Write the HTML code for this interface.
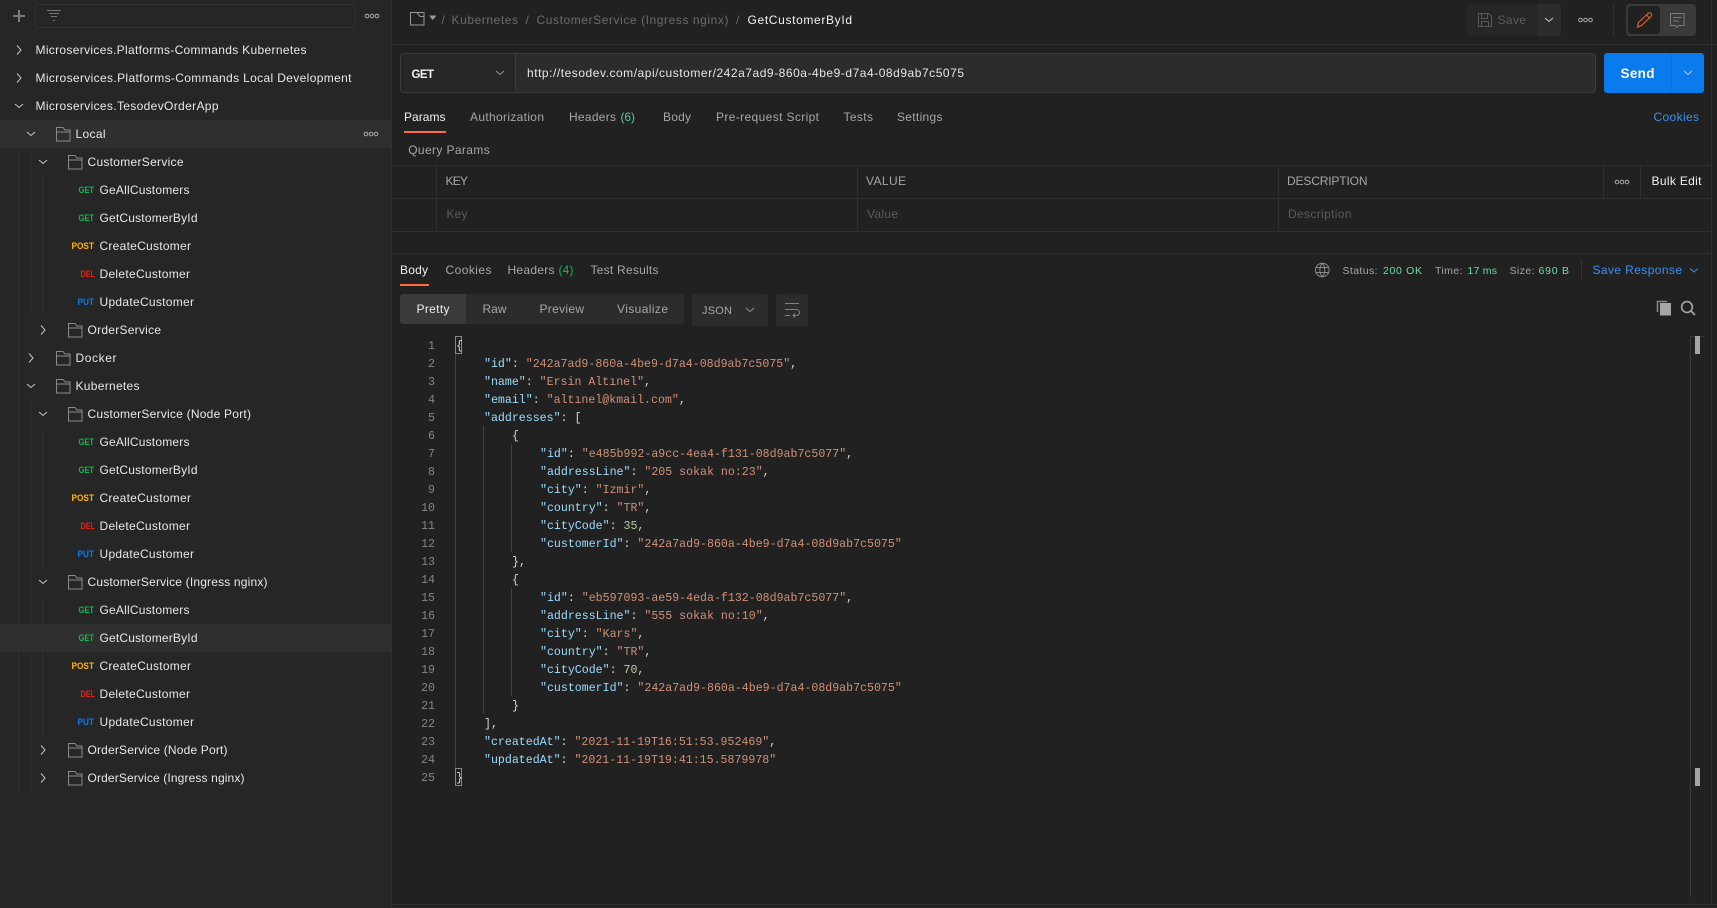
<!DOCTYPE html>
<html lang="en"><head><meta charset="utf-8"><title>GetCustomerById</title>
<style>
html,body{margin:0;padding:0;background:#212121;width:1717px;height:908px;overflow:hidden}
svg{display:block}
text{font-family:"Liberation Sans",sans-serif;font-size:12px;fill:#a6a6a6}
.s text,text.s{fill:#e8e8e8}
.m text{font-size:9.5px;font-weight:700}
.g{fill:#0cbb52}.p{fill:#ffb400}.d{fill:#eb2013}.u{fill:#097bed}
.c text{font-family:"Liberation Mono",monospace;font-size:11.6px;fill:#d4d4d4;white-space:pre}
.n text{font-family:"Liberation Mono",monospace;font-size:11.6px;fill:#858585;text-anchor:end}
.k{fill:#9cdcfe}.v{fill:#ce9178}.b{fill:#b5cea8}
.ln{stroke:#303030;stroke-width:1;fill:none}
.ig{stroke:#404040;stroke-width:1;fill:none}
</style></head><body>
<svg width="1717" height="908" viewBox="0 0 1717 908" xmlns="http://www.w3.org/2000/svg">
<defs>
<symbol id="fo" width="15" height="15" viewBox="0 0 15 15"><path d="M.5 14V.5H7L9 3H14V14ZM.5 5H14" fill="none" stroke="#8a8a8a"/></symbol>
<symbol id="cr" width="6" height="10" viewBox="0 0 6 10"><path d="M1 .5L5 5 1 9.5" fill="none" stroke="#c4c4c4"/></symbol>
<symbol id="cd" width="10" height="6" viewBox="0 0 10 6"><path d="M1 1L5 4.5 9 1" fill="none" stroke="#c4c4c4"/></symbol>
<symbol id="dt" width="15" height="5" viewBox="0 0 15 5"><g fill="none" stroke="#aaa"><circle cx="2.5" cy="2.5" r="1.8"/><circle cx="7.5" cy="2.5" r="1.8"/><circle cx="12.5" cy="2.5" r="1.8"/></g></symbol>
</defs>

<!-- main bg -->
<rect width="1717" height="908" fill="#212121"/>
<!-- sidebar -->
<rect width="391" height="908" fill="#262626"/>
<rect x="391" width="1" height="908" fill="#2e2e2e"/>
<rect y="120" width="391" height="28" fill="#2f2f2f"/>
<rect y="624" width="391" height="28" fill="#2f2f2f"/>
<path d="M18.5 148V792M30.5 148V316M30.5 400V792M42.5 176V316M42.5 428V568M42.5 596V736" class="ln"/>

<!-- sidebar top -->
<path d="M13 16H25M19 10V22" stroke="#7a7a7a" stroke-width="2" fill="none"/>
<rect x="35.5" y="4.5" width="320" height="23" rx="2" fill="none" stroke="#303030"/>
<path d="M47 10.500H61M49 13.500H59M51 16.500H57M53 20.500H55" stroke="#777" fill="none"/>
<use href="#dt" x="364.500" y="13.500"/>
<use href="#dt" x="363.500" y="131.500"/>

<!-- chevrons -->
<use href="#cr" x="16" y="45"/><use href="#cr" x="16" y="73"/><use href="#cd" x="14" y="103"/>
<use href="#cd" x="26" y="131"/><use href="#cd" x="38" y="159"/>
<use href="#cr" x="40" y="325"/><use href="#cr" x="28" y="353"/><use href="#cd" x="26" y="383"/>
<use href="#cd" x="38" y="411"/><use href="#cd" x="38" y="579"/>
<use href="#cr" x="40" y="745"/><use href="#cr" x="40" y="773"/>
<!-- folders -->
<use href="#fo" x="56" y="127"/><use href="#fo" x="68" y="155"/><use href="#fo" x="68" y="323"/><use href="#fo" x="56" y="351"/><use href="#fo" x="56" y="379"/><use href="#fo" x="68" y="407"/><use href="#fo" x="68" y="575"/><use href="#fo" x="68" y="743"/><use href="#fo" x="68" y="771"/>

<g class="s">
<text x="35.500" y="54" textLength="271">Microservices.Platforms-Commands Kubernetes</text>
<text x="35.500" y="82" textLength="316">Microservices.Platforms-Commands Local Development</text>
<text x="35.500" y="110" textLength="183">Microservices.TesodevOrderApp</text>
<text x="75.500" y="138" textLength="30">Local</text>
<text x="87.500" y="166" textLength="96">CustomerService</text>
<text x="99.500" y="194" textLength="90">GeAllCustomers</text>
<text x="99.500" y="222" textLength="98">GetCustomerById</text>
<text x="99.500" y="250" textLength="91.500">CreateCustomer</text>
<text x="99.500" y="278" textLength="90.500">DeleteCustomer</text>
<text x="99.500" y="306" textLength="94.500">UpdateCustomer</text>
<text x="87.500" y="334" textLength="73.500">OrderService</text>
<text x="75.500" y="362" textLength="41">Docker</text>
<text x="75.500" y="390" textLength="64">Kubernetes</text>
<text x="87.500" y="418" textLength="163.500">CustomerService (Node Port)</text>
<text x="99.500" y="446" textLength="90">GeAllCustomers</text>
<text x="99.500" y="474" textLength="98">GetCustomerById</text>
<text x="99.500" y="502" textLength="91.500">CreateCustomer</text>
<text x="99.500" y="530" textLength="90.500">DeleteCustomer</text>
<text x="99.500" y="558" textLength="94.500">UpdateCustomer</text>
<text x="87.500" y="586" textLength="180">CustomerService (Ingress nginx)</text>
<text x="99.500" y="614" textLength="90">GeAllCustomers</text>
<text x="99.500" y="642" textLength="98">GetCustomerById</text>
<text x="99.500" y="670" textLength="91.500">CreateCustomer</text>
<text x="99.500" y="698" textLength="90.500">DeleteCustomer</text>
<text x="99.500" y="726" textLength="94.500">UpdateCustomer</text>
<text x="87.500" y="754" textLength="140">OrderService (Node Port)</text>
<text x="87.500" y="782" textLength="157">OrderService (Ingress nginx)</text>
</g>
<g class="m">
<text class="g" x="78.500" y="193" textLength="15.500" lengthAdjust="spacingAndGlyphs">GET</text>
<text class="g" x="78.500" y="221" textLength="15.500" lengthAdjust="spacingAndGlyphs">GET</text>
<text class="p" x="71.500" y="249" textLength="22.500" lengthAdjust="spacingAndGlyphs">POST</text>
<text class="d" x="80.500" y="277" textLength="14.500" lengthAdjust="spacingAndGlyphs">DEL</text>
<text class="u" x="77.500" y="305" textLength="16.500" lengthAdjust="spacingAndGlyphs">PUT</text>
<text class="g" x="78.500" y="445" textLength="15.500" lengthAdjust="spacingAndGlyphs">GET</text>
<text class="g" x="78.500" y="473" textLength="15.500" lengthAdjust="spacingAndGlyphs">GET</text>
<text class="p" x="71.500" y="501" textLength="22.500" lengthAdjust="spacingAndGlyphs">POST</text>
<text class="d" x="80.500" y="529" textLength="14.500" lengthAdjust="spacingAndGlyphs">DEL</text>
<text class="u" x="77.500" y="557" textLength="16.500" lengthAdjust="spacingAndGlyphs">PUT</text>
<text class="g" x="78.500" y="613" textLength="15.500" lengthAdjust="spacingAndGlyphs">GET</text>
<text class="g" x="78.500" y="641" textLength="15.500" lengthAdjust="spacingAndGlyphs">GET</text>
<text class="p" x="71.500" y="669" textLength="22.500" lengthAdjust="spacingAndGlyphs">POST</text>
<text class="d" x="80.500" y="697" textLength="14.500" lengthAdjust="spacingAndGlyphs">DEL</text>
<text class="u" x="77.500" y="725" textLength="16.500" lengthAdjust="spacingAndGlyphs">PUT</text>
</g>

<!-- header -->
<rect x="392" y="44" width="1325" height="1" fill="#303030"/>
<path d="M410.500 12.500H424V25H410.500ZM417 12.500L420 16.500H424" fill="none" stroke="#999"/>
<path d="M429 15.500H436.500L432.700 20Z" fill="#999"/>
<text x="441.500" y="24" style="fill:#6b6b6b">/</text>
<text x="451.500" y="24" textLength="66.500" style="fill:#6b6b6b">Kubernetes</text>
<text x="525.500" y="24" style="fill:#6b6b6b">/</text>
<text x="536.500" y="24" textLength="192" style="fill:#6b6b6b">CustomerService (Ingress nginx)</text>
<text x="736" y="24" style="fill:#6b6b6b">/</text>
<text x="747.500" y="24" textLength="104.500" style="fill:#f2f2f2">GetCustomerById</text>

<!-- save -->
<rect x="1467" y="4" width="70" height="32" rx="3" fill="#262626"/>
<path d="M1537 4H1558a3 3 0 0 1 3 3V33a3 3 0 0 1-3 3H1537Z" fill="#2c2c2c"/>
<path d="M1478.500 13.500H1488.500L1491.500 16.500V26.500H1478.500ZM1481.500 13.500V18.500H1487.500V13.500M1481.500 26.500V21.500H1488.500V26.500" fill="none" stroke="#585858"/>
<text x="1497.500" y="24" textLength="28.500" style="fill:#5c5c5c">Save</text>
<use href="#cd" x="1544" y="17"/>
<use href="#dt" x="1578" y="17.500"/>
<rect x="1613" y="4" width="1" height="32" fill="#303030"/>
<rect x="1626" y="4" width="70" height="32" rx="4" fill="#3a3a3a"/>
<rect x="1628" y="6" width="32" height="28" rx="3" fill="#212121"/>
<path d="M1637.500 27L1638.500 22.500 1648 13.500A1.500 1.500 0 0 1 1651 16.500L1641.500 25.500ZM1646.500 15L1649.500 18" fill="none" stroke="#d9602f" stroke-width="1.200"/>
<path d="M1670.500 13.500H1684V25.500H1679L1677 27.500 1675 25.500H1670.500ZM1673 17.500H1681.500M1673 21H1679" fill="none" stroke="#7a7a7a"/>

<!-- URL bar -->
<rect x="400.500" y="53.500" width="1195" height="39" rx="3" fill="#2c2c2c" stroke="#3a3a3a"/>
<path d="M515 54H404a3 3 0 0 0-3 3v32a3 3 0 0 0 3 3h111z" fill="#262626"/>
<rect x="515" y="54" width="1" height="38" fill="#3a3a3a"/>
<text x="411.500" y="78" textLength="22.500" style="fill:#f2f2f2;font-weight:700;font-size:11.5px">GET</text>
<use href="#cd" x="495" y="70" style="opacity:.7"/>
<text x="527" y="77" textLength="437" style="fill:#e6e6e6">http://tesodev.com/api/customer/242a7ad9-860a-4be9-d7a4-08d9ab7c5075</text>
<rect x="1604" y="53" width="100" height="40" rx="3" fill="#097bed"/>
<rect x="1671" y="53" width="1" height="40" fill="#0a6fd8"/>
<text x="1620.500" y="78" textLength="34" style="fill:#fff;font-size:13.500px;font-weight:700">Send</text>
<use href="#cd" x="1683" y="70"/>

<!-- req tabs -->
<text x="404" y="121" textLength="41.500" style="fill:#f0f0f0">Params</text>
<rect x="404" y="131" width="42" height="2" fill="#ff6c37"/>
<text x="470" y="121" textLength="74">Authorization</text>
<text x="569" y="121" textLength="47">Headers</text>
<text x="620.500" y="121" textLength="14.500" style="fill:#5fc89a">(6)</text>
<text x="663" y="121" textLength="28">Body</text>
<text x="716" y="121" textLength="103">Pre-request Script</text>
<text x="843.500" y="121" textLength="29.500">Tests</text>
<text x="897" y="121" textLength="45.500">Settings</text>
<text x="1653.500" y="121" textLength="45.500" style="fill:#3a90f0">Cookies</text>
<text x="408.200" y="154" textLength="81.500">Query Params</text>

<!-- table -->
<path d="M392 165.500H1712M392 198.500H1712M392 231.500H1712M436.500 166V231M857.500 166V231M1278.500 166V231M1603.500 166V198M1640.500 166V198" stroke="#2f2f2f" fill="none"/>
<text x="445.500" y="185" textLength="22.500">KEY</text>
<text x="866" y="185" textLength="40">VALUE</text>
<text x="1287" y="185" textLength="80.500">DESCRIPTION</text>
<use href="#dt" x="1614.500" y="179.500"/>
<text x="1651.500" y="185" textLength="50" style="fill:#f0f0f0">Bulk Edit</text>
<text x="446.500" y="218" textLength="21" style="fill:#5a5a5a">Key</text>
<text x="867" y="218" textLength="31" style="fill:#5a5a5a">Value</text>
<text x="1288" y="218" textLength="63.500" style="fill:#5a5a5a">Description</text>

<!-- response -->
<rect x="392" y="253" width="1320" height="1" fill="#303030"/>
<text x="400" y="274" textLength="28" style="fill:#f0f0f0">Body</text>
<rect x="400" y="284" width="29" height="2" fill="#ff6c37"/>
<text x="445.500" y="274" textLength="46">Cookies</text>
<text x="507.500" y="274" textLength="47">Headers</text>
<text x="558.500" y="274" textLength="15" style="fill:#0cbb52">(4)</text>
<text x="590.500" y="274" textLength="68">Test Results</text>

<path d="M1315.500 270a6.800 6.800 0 1 0 13.600 0a6.800 6.800 0 1 0-13.600 0M1316 267.500H1328.500M1316 272.500H1328.500M1322.300 263.200C1319 267 1319 273 1322.300 276.800C1325.600 273 1325.600 267 1322.300 263.200" fill="none" stroke="#8d8d8d"/>
<text x="1342.500" y="274" textLength="35" style="font-size:10.500px">Status:</text>
<text x="1383" y="274" textLength="39" style="fill:#6fdba5;font-size:10.500px">200 OK</text>
<text x="1435" y="274" textLength="27.500" style="font-size:10.500px">Time:</text>
<text x="1467.500" y="274" textLength="29.500" style="fill:#6fdba5;font-size:10.500px">17 ms</text>
<text x="1509.500" y="274" textLength="25" style="font-size:10.500px">Size:</text>
<text x="1538.500" y="274" textLength="30.500" style="fill:#6fdba5;font-size:10.500px">690 B</text>
<rect x="1581" y="260" width="1" height="20" fill="#333"/>
<text x="1592.500" y="274" textLength="89.500" style="fill:#3a90f0">Save Response</text>
<path d="M1690 268.500L1694 272 1698 268.500" fill="none" stroke="#3a90f0"/>

<rect x="400" y="294" width="284" height="30" rx="3" fill="#2c2c2c"/>
<path d="M466 294H403a3 3 0 0 0-3 3v24a3 3 0 0 0 3 3h63z" fill="#3a3a3a"/>
<text x="416.500" y="313" textLength="33" style="fill:#f0f0f0">Pretty</text>
<text x="482.500" y="313" textLength="24">Raw</text>
<text x="539.500" y="313" textLength="44.500">Preview</text>
<text x="617" y="313" textLength="51">Visualize</text>
<rect x="692" y="294" width="76" height="32" rx="3" fill="#2c2c2c"/>
<text x="702" y="314" textLength="30" style="font-size:11px">JSON</text>
<use href="#cd" x="745" y="307" style="opacity:.7"/>
<rect x="776" y="294" width="32" height="32" rx="3" fill="#2c2c2c"/>
<path d="M785 303.500H799M785 309.500H796.500a3 3 0 0 1 0 6H793M795 313.500L793 315.500 795 317.500M785 315.500H790" fill="none" stroke="#7e7e7e"/>

<path d="M1657.500 312V301.500H1667" fill="none" stroke="#888" stroke-width="1.500"/>
<rect x="1660" y="303" width="11" height="12.500" fill="#a6a6a6"/>
<circle cx="1687" cy="307" r="5.400" fill="none" stroke="#a6a6a6" stroke-width="1.600"/>
<path d="M1690.500 310.500L1695 315" stroke="#a6a6a6" stroke-width="1.800"/>

<!-- indent guides -->
<path d="M455.500 354V768M483.500 426V714M511.500 444V552M511.500 588V696" class="ig"/>
<rect x="455.500" y="336.500" width="6" height="17" fill="none" stroke="#838b83"/>
<rect x="455.500" y="768.500" width="6" height="17" fill="none" stroke="#838b83"/>

<!-- line numbers -->
<g class="n">
<text x="435" y="349">1</text><text x="435" y="367">2</text><text x="435" y="385">3</text><text x="435" y="403">4</text><text x="435" y="421">5</text><text x="435" y="439">6</text><text x="435" y="457">7</text><text x="435" y="475">8</text><text x="435" y="493">9</text><text x="435" y="511">10</text><text x="435" y="529">11</text><text x="435" y="547">12</text><text x="435" y="565">13</text><text x="435" y="583">14</text><text x="435" y="601">15</text><text x="435" y="619">16</text><text x="435" y="637">17</text><text x="435" y="655">18</text><text x="435" y="673">19</text><text x="435" y="691">20</text><text x="435" y="709">21</text><text x="435" y="727">22</text><text x="435" y="745">23</text><text x="435" y="763">24</text><text x="435" y="781">25</text>
</g>
<!-- code -->
<g class="c">
<text x="456" y="349">{</text>
<text x="484" y="367"><tspan class="k">"id"</tspan>: <tspan class="v">"242a7ad9-860a-4be9-d7a4-08d9ab7c5075"</tspan>,</text>
<text x="484" y="385"><tspan class="k">"name"</tspan>: <tspan class="v">"Ersin Altınel"</tspan>,</text>
<text x="484" y="403"><tspan class="k">"email"</tspan>: <tspan class="v">"altınel@kmail.com"</tspan>,</text>
<text x="484" y="421"><tspan class="k">"addresses"</tspan>: [</text>
<text x="512" y="439">{</text>
<text x="540" y="457"><tspan class="k">"id"</tspan>: <tspan class="v">"e485b992-a9cc-4ea4-f131-08d9ab7c5077"</tspan>,</text>
<text x="540" y="475"><tspan class="k">"addressLine"</tspan>: <tspan class="v">"205 sokak no:23"</tspan>,</text>
<text x="540" y="493"><tspan class="k">"city"</tspan>: <tspan class="v">"Izmir"</tspan>,</text>
<text x="540" y="511"><tspan class="k">"country"</tspan>: <tspan class="v">"TR"</tspan>,</text>
<text x="540" y="529"><tspan class="k">"cityCode"</tspan>: <tspan class="b">35</tspan>,</text>
<text x="540" y="547"><tspan class="k">"customerId"</tspan>: <tspan class="v">"242a7ad9-860a-4be9-d7a4-08d9ab7c5075"</tspan></text>
<text x="512" y="565">},</text>
<text x="512" y="583">{</text>
<text x="540" y="601"><tspan class="k">"id"</tspan>: <tspan class="v">"eb597093-ae59-4eda-f132-08d9ab7c5077"</tspan>,</text>
<text x="540" y="619"><tspan class="k">"addressLine"</tspan>: <tspan class="v">"555 sokak no:10"</tspan>,</text>
<text x="540" y="637"><tspan class="k">"city"</tspan>: <tspan class="v">"Kars"</tspan>,</text>
<text x="540" y="655"><tspan class="k">"country"</tspan>: <tspan class="v">"TR"</tspan>,</text>
<text x="540" y="673"><tspan class="k">"cityCode"</tspan>: <tspan class="b">70</tspan>,</text>
<text x="540" y="691"><tspan class="k">"customerId"</tspan>: <tspan class="v">"242a7ad9-860a-4be9-d7a4-08d9ab7c5075"</tspan></text>
<text x="512" y="709">}</text>
<text x="484" y="727">],</text>
<text x="484" y="745"><tspan class="k">"createdAt"</tspan>: <tspan class="v">"2021-11-19T16:51:53.952469"</tspan>,</text>
<text x="484" y="763"><tspan class="k">"updatedAt"</tspan>: <tspan class="v">"2021-11-19T19:41:15.5879978"</tspan></text>
<text x="456" y="781">}</text>
</g>

<!-- scrollbars & edges -->
<path d="M1690.500 336V897M1690 336.500H1704" stroke="#383838" fill="none"/>
<rect x="1695" y="336" width="5" height="18" fill="#a6a6a6"/>
<rect x="1695" y="768" width="5" height="18" fill="#a6a6a6"/>
<rect x="1711" y="0" width="1" height="904" fill="#2e2e2e"/>
<rect x="392" y="904" width="1325" height="1" fill="#303030"/>
</svg>
</body></html>
